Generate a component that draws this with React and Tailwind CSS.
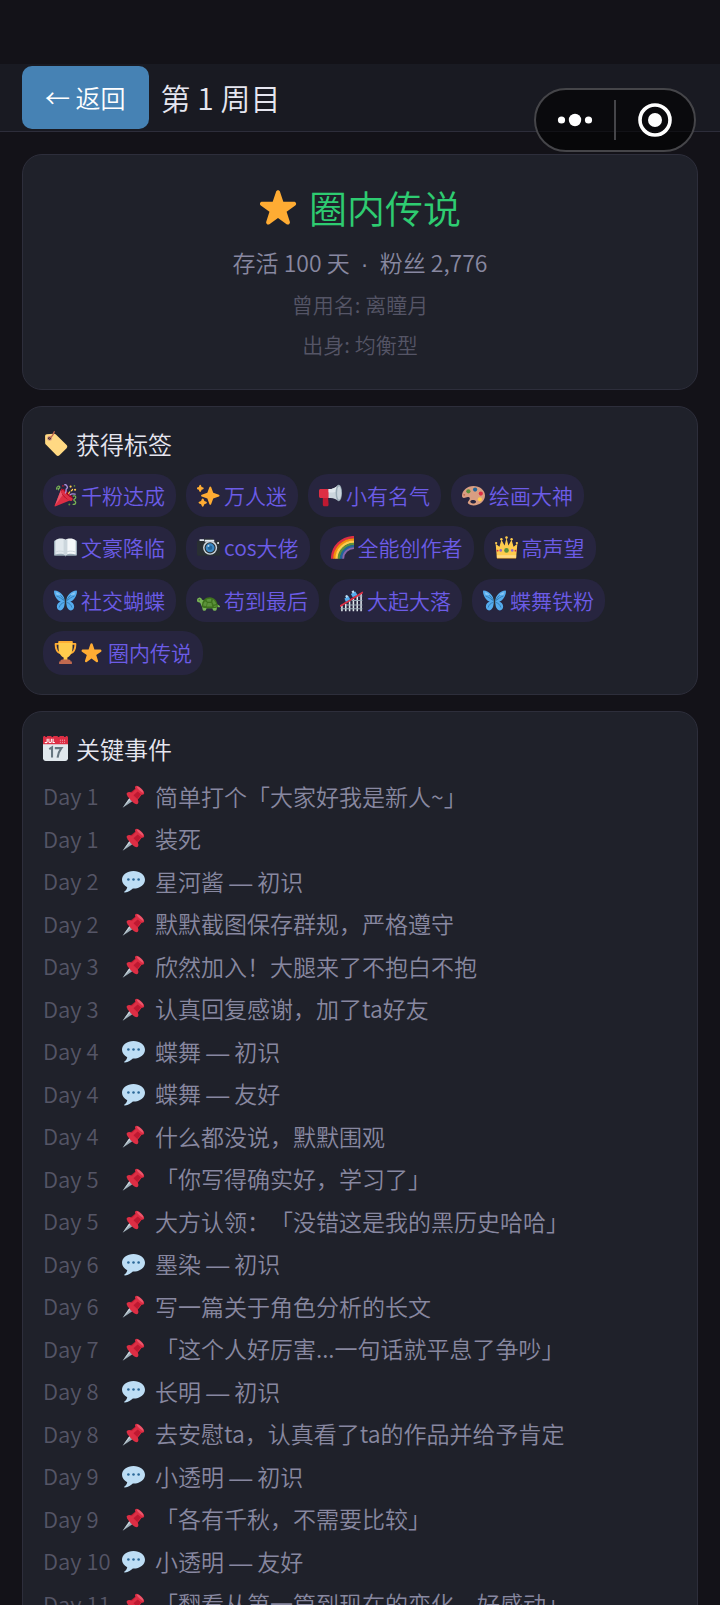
import React from "react";

const drawings = {
  star: (
    <path
      fill="#FFAC33"
      d="M27.287 34.627c-.404 0-.806-.124-1.152-.371L18 28.422l-8.135 5.834c-.343.247-.745.371-1.147.371-.405 0-.81-.125-1.157-.377-.69-.5-.978-1.4-.711-2.21l3.062-9.561-8.197-5.838c-.695-.5-.985-1.395-.725-2.206.264-.815 1.017-1.366 1.869-1.369l10.11-.012 3.199-9.56c.27-.8 1.02-1.344 1.864-1.344.844 0 1.594.541 1.864 1.343l3.138 9.561 10.17.012c.853.003 1.608.554 1.871 1.369.26.811-.03 1.706-.725 2.206l-8.203 5.838 3.067 9.562c.267.81-.02 1.71-.713 2.21-.346.251-.752.376-1.157.376z"
    />
  ),
  label: (
    <g>
      <path
        fill="#FFD983"
        d="M3 7.500c0-1.500 1-2.500 2.500-2.700l10-1c1.200-.1 2.200.2 3.100 1.100l15.400 15.300c1.300 1.300 1.300 3.200 0 4.500L23.700 34.900c-1.300 1.300-3.200 1.300-4.500 0L4.100 19.600c-.7-.7-1-1.500-1-2.500z"
      />
      <circle cx="9.500" cy="10.500" r="3.600" fill="#D99E82" />
      <circle cx="9.500" cy="10.500" r="2" fill="#1f212a" />
      <path d="M9.500 10.500C12 9 15 6 16.200 1" fill="none" stroke="#C1694F" strokeWidth="1.800" strokeLinecap="round" />
    </g>
  ),
  party: (
    <g>
      <path fill="#DD2E44" d="M11.600 7.600 1 33.500c-.5 1.300.4 2 1.600 1.500l26-10.700c1-5-4-8-8-11-3-3-5-6-9-5.700z" />
      <path fill="#EA596E" d="M11.600 7.600 8 16.500 2 33l11-15z" />
      <path fill="#A0041E" d="M11.300 12c1.600 6 6.500 11 13.500 13.500 2 .5 4 0 4.300-1.500.9-4-4-9-8-12S12.500 6.700 11.500 8.500c-.4.900-.5 2-.2 3.500z" />
      <path d="M13.500 12c1 1 6 9 13 12" fill="none" stroke="#DD2E44" strokeWidth="5" strokeLinecap="round" />
      <path d="M4 8c0-5 5-6 5-3s-4 1-2 4" fill="none" stroke="#77B255" strokeWidth="2" strokeLinecap="round" />
      <path d="M18 14c2-4 0-5 1.500-6.500S22 6 20 3s-3-2-3-2" fill="none" stroke="#AA8DD8" strokeWidth="2.200" strokeLinecap="round" />
      <path d="M23 15c1-4 6-4 6-7" fill="none" stroke="#FFCC4D" strokeWidth="2" strokeLinecap="round" strokeDasharray="3 3" />
      <path d="M30 19c3-1 4 0 4 2s-3 2-3 4 3 1 3 4-4 3-4 3" fill="none" stroke="#77B255" strokeWidth="2" strokeLinecap="round" />
      <path d="M25 17c2-2 5-2 8-1" fill="none" stroke="#AA8DD8" strokeWidth="2" strokeLinecap="round" />
      <circle cx="26" cy="4" r="1.700" fill="#FFCC4D" />
      <circle cx="33" cy="9" r="1.700" fill="#FFCC4D" />
      <circle cx="32" cy="3" r="1.300" fill="#5C913B" />
      <circle cx="14" cy="3" r="1.300" fill="#BE1931" />
      <circle cx="24" cy="32" r="1.500" fill="#5C913B" />
    </g>
  ),
  sparkles: (
    <path
      fill="#FFAC33"
      d="M34.300 16.900l-8.900-3.300-3.300-8.900c-.2-.5-.7-.9-1.300-.9s-1.100.4-1.300.9l-3.300 8.900-8.900 3.300c-.5.2-.9.700-.9 1.300s.4 1.100.9 1.300l8.900 3.300 3.300 8.900c.2.500.7.900 1.300.9s1.100-.4 1.300-.9l3.300-8.900 8.900-3.300c.5-.2.9-.7.9-1.300s-.4-1.100-.9-1.300zM14.500 27.700l-3-1.200-1.200-3c-.5-1.200-2.200-1.200-2.700 0l-1.200 3-3 1.200c-1.200.5-1.200 2.200 0 2.700l3 1.200 1.200 3c.5 1.200 2.200 1.200 2.700 0l1.200-3 3-1.200c1.200-.5 1.200-2.200 0-2.700zM9.600 5.500 7.200 4.600 6.300 2.200C5.800 1 4.200 1 3.700 2.200l-.9 2.400-2.400.9c-1.200.5-1.200 2.100 0 2.600l2.400.9.9 2.400c.5 1.200 2.100 1.200 2.600 0l.9-2.400 2.400-.9c1.200-.5 1.200-2.100 0-2.600z"
    />
  ),
  megaphone: (
    <g>
      <path fill="#BE1931" d="M6 19h8l1 13c0 2-1 3-3 3H9c-2 0-3-1-3-3z" />
      <path fill="#DD2E44" d="M3 8h13v14H3c-2 0-3-1.500-3-3v-8c0-2 1-3 3-3z" />
      <path fill="#CCD6DD" d="M15 8C21 8 27 5 31 1v26c-4-4-10-6-16-5z" />
      <path fill="#E1E8ED" d="M15 8C21 8 27 5 31 1v9c-5 3-11 4-16 3z" />
      <ellipse cx="31" cy="14" rx="5" ry="13" fill="#99AAB5" />
      <ellipse cx="31.500" cy="14" rx="3.200" ry="10.500" fill="#CCD6DD" />
    </g>
  ),
  palette: (
    <g>
      <path
        fill="#D99E82"
        d="M18 3C8 3 0 10 0 18.500c0 2 1 3.500 3 3.500 3 0 4-2 7-1.500 4 .7 2 4.500 0 6.500-3 3 2 6.500 8 6.500 10 0 18-7 18-15.500S28 3 18 3zm-1 27.500c-2.500 0-4-1.300-4-3s2-2.500 4-2.500c2.500 0 5 1 5 2.700s-2 2.800-5 2.800z"
      />
      <circle cx="10" cy="11.500" r="3.300" fill="#5C913B" />
      <circle cx="20.500" cy="8.800" r="3.300" fill="#226699" />
      <circle cx="29.500" cy="15" r="3.300" fill="#DD2E44" />
      <circle cx="28" cy="24" r="3.300" fill="#FFCC4D" />
      <circle cx="3.500" cy="17" r="1.500" fill="#C1694F" />
    </g>
  ),
  book: (
    <g>
      <path fill="#99AAB5" d="M0 9c0-1 .5-2 2-2h32c1.500 0 2 1 2 2v20c0 1.500-1 2-2 2H20c-1 0-1 1-2 1s-1-1-2-1H2c-1.500 0-2-1-2-2z" />
      <path fill="#E1E8ED" d="M2 7c4-4 12-4 16-1v24c-4-3-11-3-16-1z" />
      <path fill="#F5F8FA" d="M34 7c-4-4-12-4-16-1v24c4-3 11-3 16-1z" />
      <path fill="#CCD6DD" d="M15 5c1.500.3 2.300.6 3 1 .7-.4 1.500-.7 3-1v23c-1 .3-2 1-3 2-1-1-2-1.700-3-2z" />
      <path d="M3 25c5-2 11-2 15 1 4-3 10-3 15-1" fill="none" stroke="#CCD6DD" strokeWidth="1.500" />
    </g>
  ),
  camera: (
    <g>
      <path fill="#292F33" d="M3 7h8V4h14v3h8c2 0 3 1 3 3v18c0 2-1 3-3 3H3c-2 0-3-1-3-3V10c0-2 1-3 3-3z" />
      <path fill="#E1E8ED" d="M4 5h7v3H4zM12 6h15v3H12z" />
      <circle cx="33" cy="11" r="1.500" fill="#F5F8FA" />
      <circle cx="20.500" cy="18.500" r="11" fill="#CCD6DD" />
      <circle cx="20.500" cy="18.500" r="8.700" fill="#292F33" />
      <circle cx="20.500" cy="18.500" r="7" fill="#3B88C3" />
      <circle cx="20.500" cy="18.500" r="3.500" fill="#226699" />
      <circle cx="18" cy="15.500" r="1.500" fill="#BBDDF5" />
    </g>
  ),
  rainbow: (
    <g fill="none" strokeWidth="4.200">
      <path stroke="#DD2E44" d="M2 35.500C2 17 17 2 36 2" />
      <path stroke="#F4900C" d="M5.500 35.500C5.500 19 19 5.500 36 5.500" />
      <path stroke="#FFCC4D" d="M9 35.500C9 21 21 9 36 9" />
      <path stroke="#5C913B" d="M12.500 35.500C12.500 23 23 12.500 36 12.500" />
      <path stroke="#226699" d="M16 35.500C16 25 25 16 36 16" />
      <path stroke="#8767AC" strokeWidth="3" d="M19 35.500C19 26 27 19 36 19" />
    </g>
  ),
  crown: (
    <g>
      <path fill="#F4900C" d="M3 29h30v6H3z" />
      <path fill="#FFCC4D" d="M1 12l6 5 3-11 5 9 3-12 3 12 5-9 3 11 6-5-2 23H3z" />
      <path fill="#FFD983" d="M3 30h30v4H3z" />
      <g fill="#FFCC4D">
        <circle cx="1.800" cy="11" r="1.800" />
        <circle cx="10" cy="5" r="1.900" />
        <circle cx="18" cy="2.500" r="2" />
        <circle cx="26" cy="5" r="1.900" />
        <circle cx="34.200" cy="11" r="1.800" />
      </g>
      <circle cx="18" cy="22.500" r="3.600" fill="#5C913B" />
      <circle cx="9" cy="22.500" r="2" fill="#9266CC" />
      <circle cx="27" cy="22.500" r="2" fill="#9266CC" />
      <circle cx="4" cy="23" r="1.400" fill="#DD2E44" />
      <circle cx="32" cy="23" r="1.400" fill="#DD2E44" />
    </g>
  ),
  butterfly: (
    <g>
      <path fill="#55ACEE" d="M17.500 19C16 10 9 3 1 2.500c-1.500 0-1 3.500 0 6.500 1.500 5 5 9.500 9.500 11-3 .5-6 3.500-6 7.500 0 3.500 2 6 5 6 4.500 0 7-5 8-13z" />
      <path fill="#55ACEE" d="M18.500 19C20 10 27 3 35 2.500c1.500 0 1 3.500 0 6.500-1.500 5-5 9.500-9.500 11 3 .5 6 3.500 6 7.500 0 3.500-2 6-5 6-4.500 0-7-5-8-13z" />
      <path d="M4 6c5 2 10 7 12 12M4 11c4 1 8 4 11 7M8 29c1-4 4-7 8-8M32 6c-5 2-10 7-12 12M32 11c-4 1-8 4-11 7M28 29c-1-4-4-7-8-8" fill="none" stroke="#269" strokeWidth="1" />
      <path fill="#8CCAF7" d="M3 5c3 0 6 2 8 5-3-1-6-1-7-1zM33 5c-3 0-6 2-8 5 3-1 6-1 7-1z" />
      <path fill="#292F33" d="M16.800 15c0-2 2.400-2 2.400 0v14c0 3-2.400 3-2.400 0z" />
      <path d="M17.500 15C17 10 15 8 13 7M18.500 15c.5-5 2.500-7 4.500-8" fill="none" stroke="#292F33" strokeWidth="1" strokeLinecap="round" />
    </g>
  ),
  turtle: (
    <g transform="translate(0 4)">
      <path fill="#77B255" d="M8 13c-1-3-3-4-5-3.500C0 10 0 13 0 14.500c0 2 2 2.500 4 2.500 2 .5 2 4 4 7l1 5c0 1.500 5 1.500 5 0l1-3h9l1 3c0 1.500 5.500 1.500 5.500 0l1-5c2 0 4 1 4.500 0S34 21 31 20z" />
      <path fill="#3E721D" d="M7.500 23C8 14 13 9 20 9s12 6 12.500 14c0 2-2 3-12.500 3S7.500 25 7.500 23z" />
      <path fill="#5C913B" d="M9.500 22c.5-3 1.500-5 3-7l3 2-1 6zM14.500 13c2-1.500 5-2 8-1.500L21.500 16h-5zM25 12.500c2.500 1.500 4 4 5 7l-4 1-2-4zM16.500 18h6l1.500 5.500h-8.500zM26 22.500l4.500-1 .5 2-4.500.8z" />
      <circle cx="3.500" cy="13" r="1" fill="#292F33" />
    </g>
  ),
  coaster: (
    <g>
      <path d="M3 35V26M9 35V23M15 35V19M21 35V15M27 35V11M33 35V7" fill="none" stroke="#E1E8ED" strokeWidth="2.400" />
      <path d="M1 31h34M9 25h26M18 18h17M25 11h10" fill="none" stroke="#99AAB5" strokeWidth="1.600" />
      <path d="M0 27L36 5" stroke="#DD2E44" strokeWidth="3" />
      <path fill="#55ACEE" d="M7 15l6-4 3 5-7 4zM17 8l7-4 3 5-7 4z" />
      <path fill="#BBDDF5" d="M8 11l3-2 2 3-3 2zM18 4l3-2 2 3-3 2z" />
    </g>
  ),
  trophy: (
    <g>
      <path d="M8 4.500H2.500c0 9 3 14 8.500 15M28 4.500h5.500c0 9-3 14-8.500 15" fill="none" stroke="#FFAC33" strokeWidth="3" strokeLinejoin="round" />
      <path fill="#FFAC33" d="M15 20h6v10h-6z" />
      <path fill="#FFCC4D" d="M7 1h22v9c0 8-4 14-8 15.500-1 .5-1 2.500 0 4.500h-6c1-2 1-4 0-4.500C11 24 7 18 7 10z" />
      <path fill="#FFAC33" d="M7 0h22v3H7z" />
      <path fill="#C1694F" d="M10 32c0-1.500 1-3 3-3h10c2 0 3 1.500 3 3h2v4H8v-4z" />
    </g>
  ),
  calendar: (
    <g>
      <path fill="#E1E8ED" d="M0 11h36v21c0 2.200-1.800 4-4 4H4c-2.200 0-4-1.800-4-4z" />
      <path fill="#DD2E44" d="M0 12V2c0-1 1-2 2-2h1c0 2 3 2 3 0h6c0 2 3 2 3 0h6c0 2 3 2 3 0h6c0 2 3 2 3 0h1c1 0 2 1 2 2v10z" />
      <path d="M6 4v4c0 2-3 2-3 .5M8.500 4v4c0 2 3.500 2 3.500 0V4M14.500 4v5.500H17" fill="none" stroke="#fff" strokeWidth="1.500" />
      <g fill="#F4ABBA">
        <circle cx="25" cy="6" r=".8" /><circle cx="28" cy="6" r=".8" /><circle cx="31" cy="6" r=".8" />
        <circle cx="25" cy="9" r=".8" /><circle cx="28" cy="9" r=".8" /><circle cx="31" cy="9" r=".8" />
      </g>
      <path d="M9 19l4-2.500V31M17 17.500h9.500C23 22 21.500 26 21 31" fill="none" stroke="#66757F" strokeWidth="3" />
    </g>
  ),
  pin: (
    <g>
      <path fill="#99AAB5" d="M1 35.500L12 20l5 5z" />
      <path fill="#CCD6DD" d="M1 35.500L12 20l2 2z" />
      <path fill="#BE1931" d="M12 13L24 3l9 9-10 13z" />
      <path fill="#DD2E44" d="M8 12c3-2 7-1 11.500 3.500S27 26 25 29c-1.500 2-5 1-10-4S5.500 14 8 12z" />
      <path fill="#DD2E44" d="M14 14l8-8 9 9-7 8z" />
      <path fill="#BE1931" d="M18 16l9-8 4 5-7 9z" />
      <path fill="#DD2E44" d="M21 2c2-2 5-.5 9 3.500s6 7 4 9c-2 1.500-5 0-8.500-3.500S19 4 21 2z" />
      <path fill="#EA596E" d="M23 2.500c2-1 4 .5 7 3.500s4 5 3 6.500C31 12 24 6 23 2.500z" />
    </g>
  ),
  speech: (
    <g>
      <path fill="#BDDDF4" d="M18 1.500C8 1.500 0 7.600 0 15.300c0 5 3.200 9.300 8.200 11.700-.4 2.800-2.300 5-4.400 6.700-.8.800-.2 1.600.9 1.500 5-.6 9.500-3.200 12.300-6.100h1c10 0 18-6.100 18-13.800S28 1.500 18 1.500z" />
      <g fill="#2A6797">
        <circle cx="10" cy="15" r="2" />
        <circle cx="18" cy="15" r="2" />
        <circle cx="26" cy="15" r="2" />
      </g>
    </g>
  ),
};

function Emoji({ name, className }) {
  return (
    <svg viewBox="0 0 36 36" aria-hidden="true" className={`shrink-0 ${className}`}>
      {drawings[name]}
    </svg>
  );
}

const tags = [
  { icon: "party", text: "千粉达成" },
  { icon: "sparkles", text: "万人迷" },
  { icon: "megaphone", text: "小有名气" },
  { icon: "palette", text: "绘画大神" },
  { icon: "book", text: "文豪降临" },
  { icon: "camera", text: "cos大佬" },
  { icon: "rainbow", text: "全能创作者" },
  { icon: "crown", text: "高声望" },
  { icon: "butterfly", text: "社交蝴蝶" },
  { icon: "turtle", text: "苟到最后" },
  { icon: "coaster", text: "大起大落" },
  { icon: "butterfly", text: "蝶舞铁粉" },
  { icon: "trophy", text: "圈内传说", starred: true },
];

const events = [
  [1, "pin", "简单打个「大家好我是新人~」"],
  [1, "pin", "装死"],
  [2, "speech", "星河酱", "初识"],
  [2, "pin", "默默截图保存群规，严格遵守"],
  [3, "pin", "欣然加入！大腿来了不抱白不抱"],
  [3, "pin", "认真回复感谢，加了ta好友"],
  [4, "speech", "蝶舞", "初识"],
  [4, "speech", "蝶舞", "友好"],
  [4, "pin", "什么都没说，默默围观"],
  [5, "pin", "「你写得确实好，学习了」"],
  [5, "pin", "大方认领：「没错这是我的黑历史哈哈」"],
  [6, "speech", "墨染", "初识"],
  [6, "pin", "写一篇关于角色分析的长文"],
  [7, "pin", "「这个人好厉害...一句话就平息了争吵」"],
  [8, "speech", "长明", "初识"],
  [8, "pin", "去安慰ta，认真看了ta的作品并给予肯定"],
  [9, "speech", "小透明", "初识"],
  [9, "pin", "「各有千秋，不需要比较」"],
  [10, "speech", "小透明", "友好"],
  [11, "pin", "「翻看从第一篇到现在的变化，好感动」"],
];

function Card({ className, children }) {
  return (
    <section className={`rounded-[20px] border border-[#2d2e3b] bg-[#1f212a] px-5 ${className}`}>
      {children}
    </section>
  );
}

function CardTitle({ icon, children }) {
  return (
    <h2 className="mb-3 flex items-center gap-2 text-[24px] leading-normal text-[#e6e6f0]">
      <Emoji name={icon} className="size-[25px]" />
      {children}
    </h2>
  );
}

function Capsule() {
  return (
    <div className="absolute top-[88px] right-6 flex h-16 w-[162px] items-center rounded-full border-2 border-[#454549] bg-black/60">
      <button type="button" aria-label="更多" className="flex h-full flex-1 items-center justify-center">
        <svg viewBox="0 0 36 14" className="h-[14px] w-9" fill="#fff">
          <circle cx="4.500" cy="7" r="3.600" />
          <circle cx="18" cy="7" r="6.200" />
          <circle cx="31.500" cy="7" r="3.600" />
        </svg>
      </button>
      <span className="h-10 w-0.5 bg-[#454549]" />
      <button type="button" aria-label="关闭" className="flex h-full flex-1 items-center justify-center">
        <svg viewBox="0 0 34 34" className="size-[34px]">
          <circle cx="17" cy="17" r="15" fill="none" stroke="#fff" strokeWidth="3.600" />
          <circle cx="17" cy="17" r="7" fill="#fff" />
        </svg>
      </button>
    </div>
  );
}

export default function App() {
  return (
    <div className="relative h-screen overflow-hidden bg-[#131218] pt-16 font-['Noto_Sans_CJK_SC',sans-serif] font-[350] [text-spacing-trim:space-all]">
      <header className="flex items-center gap-3 border-b border-[#2d2d3a] bg-[#191a22] px-[22px] py-0.5">
        <button
          type="button"
          className="h-[63px] rounded-[10px] bg-[#4682b4] px-[23px] text-[25px] leading-normal text-white"
        >
          ← 返回
        </button>
        <h1 className="text-[30px] leading-normal text-[#e6e6f0]">第 1 周目</h1>
      </header>
      <Capsule />

      <main className="flex flex-col gap-4 px-[22px] pt-[22px]">
        <Card className="flex flex-col items-center gap-[9px] pt-[25px] pb-7">
          <h2 className="mb-0.5 flex items-center gap-3 text-[38px] leading-[54px] text-[#2ecc71]">
            <Emoji name="star" className="size-[38px]" />
            圈内传说
          </h2>
          <p className="text-[23px] leading-normal text-[#8888a0]">
            存活 100 天 <span className="mx-1.5 font-['Liberation_Sans',sans-serif] leading-none">·</span> 粉丝 2,776
          </p>
          <p className="text-[21px] leading-normal text-[#555566]">曾用名: 离瞳月</p>
          <p className="text-[21px] leading-normal text-[#555566]">出身: 均衡型</p>
        </Card>

        <Card className="py-[19px]">
          <CardTitle icon="label">获得标签</CardTitle>
          <ul className="flex flex-wrap gap-x-[10px] gap-y-[9px]">
            {tags.map((tag) => (
              <li
                key={tag.text}
                className="flex items-center gap-1 rounded-[20px] bg-[#27253f] px-[11px] py-1.5 text-[21px] leading-normal text-[#6c5ce7]"
              >
                <Emoji name={tag.icon} className="size-[23px]" />
                {tag.starred && <Emoji name="star" className="mr-0.5 size-[21px]" />}
                {tag.text}
              </li>
            ))}
          </ul>
        </Card>

        <Card className="py-[19px]">
          <CardTitle icon="calendar">关键事件</CardTitle>
          <ul className="flex flex-col gap-2 text-[23px] leading-normal">
            {events.map(([day, icon, text, stage]) => (
              <li key={`${day}${text}${stage}`} className="flex items-center gap-[10px]">
                <span className="w-[69px] shrink-0 text-[22px] whitespace-nowrap text-[#555566]">Day {day}</span>
                <Emoji name={icon} className="mt-0.5 size-[23px]" />
                <span className="text-[#8888a0]">
                  {text}
                  {stage && (
                    <>
                      {" "}
                      <span className="font-['Liberation_Sans',sans-serif] leading-none">—</span> {stage}
                    </>
                  )}
                </span>
              </li>
            ))}
          </ul>
        </Card>
      </main>
    </div>
  );
}
